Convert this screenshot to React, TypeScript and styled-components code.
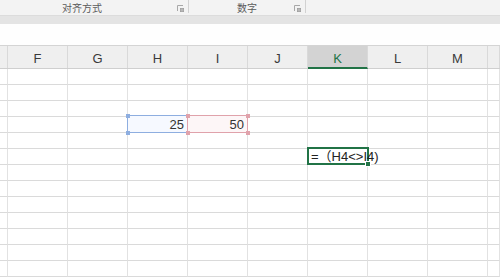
import React from "react";
import styled, { createGlobalStyle, css } from "styled-components";

const Global = createGlobalStyle`
  html, body { margin: 0; padding: 0; background: #fff; }
  body { width: 500px; height: 277px; overflow: hidden; font-family: "Liberation Sans", "Noto Sans CJK SC", sans-serif; }
  * { box-sizing: border-box; }
`;

const COLS = "8px repeat(8, 60px) 1fr";

const Page = styled.div`
  display: flex;
  flex-direction: column;
  width: 500px;
  height: 277px;
  overflow: hidden;
`;

const Ribbon = styled.div`
  display: flex;
  height: 15px;
  background: #f3f3f3;
`;

const Group = styled.div<{ $w: number; $shift?: number }>`
  position: relative;
  width: ${(p) => p.$w}px;
  height: 15px;
  display: flex;
  align-items: center;
  justify-content: center;
  padding-right: ${(p) => p.$shift ?? 0}px;
  border-right: 1px solid #d6d6d6;
  border-image: linear-gradient(to bottom, #d2d2d2 0, #d2d2d2 12px, transparent 12px) 1;
`;

const GroupLabel = styled.span`
  font-family: "Noto Sans CJK SC", sans-serif;
  font-size: 10px;
  line-height: 15px;
  height: 15px;
  color: #5a5a5a;
`;

const Launcher = styled.svg`
  position: absolute;
  right: 4px;
  top: 5px;
  width: 7px;
  height: 7px;
`;

const RibbonFoot = styled.div`
  height: 9px;
  background: #e4e4e4;
  border-top: 1px solid #dcdcdc;
`;

const FormulaArea = styled.div`
  height: 23px;
  background: #fefefe;
  border-bottom: 1px solid #d4d4d4;
`;

const HeaderRow = styled.div`
  display: grid;
  grid-template-columns: ${COLS};
  height: 24px;
  background: #efefef;
  border-bottom: 1px solid #cfcfcf;
`;

const HeadCell = styled.div<{ $active?: boolean }>`
  display: flex;
  align-items: flex-end;
  justify-content: center;
  padding-bottom: 1px;
  font-size: 13px;
  line-height: 16px;
  color: #3a3a3a;
  border-right: 1px solid #d9d9d9;
  ${(p) =>
    p.$active &&
    css`
      background: #d3d3d3;
      color: #217346;
      border-bottom: 2px solid #217346;
      margin-bottom: -1px;
      padding-bottom: 0;
    `}
`;

const Row = styled.div`
  display: grid;
  grid-template-columns: ${COLS};
  height: 16px;
  flex-shrink: 0;
`;

const Cell = styled.div<{ $noRight?: boolean }>`
  position: relative;
  height: 16px;
  border-right: 1px solid ${(p) => (p.$noRight ? "transparent" : "#e2e2e2")};
  border-bottom: 1px solid #dadada;
  font-size: 13px;
  line-height: 15px;
  color: #333;
  white-space: nowrap;
`;

const Value = styled.span`
  position: absolute;
  right: 3px;
  top: 0;
  z-index: 2;
`;

const FormulaText = styled.span`
  position: absolute;
  left: 3px;
  top: 0;
  z-index: 3;
  font-family: "Liberation Sans", "Noto Sans CJK SC", sans-serif;
  color: #222;
`;

const RefBox = styled.div<{ $color: string; $fill: string }>`
  position: absolute;
  top: -2px;
  left: -1px;
  right: -1px;
  bottom: -1px;
  border: 1px solid ${(p) => p.$color};
  background: ${(p) => p.$fill};
  z-index: 1;
`;

const Handle = styled.i<{ $color: string; $x: "l" | "r"; $y: "t" | "b" }>`
  position: absolute;
  width: 4px;
  height: 4px;
  background: ${(p) => p.$color};
  ${(p) => (p.$x === "l" ? "left: -2.5px;" : "right: -2.5px;")}
  ${(p) => (p.$y === "t" ? "top: -2.5px;" : "bottom: -2.5px;")}
`;

const ActiveBox = styled.div`
  position: absolute;
  top: -2px;
  left: -1px;
  right: -2px;
  bottom: -1px;
  border: 2px solid #217346;
  z-index: 2;
`;

const FillHandle = styled.i`
  position: absolute;
  right: -4px;
  bottom: -4px;
  width: 6px;
  height: 6px;
  background: #217346;
  border: 1px solid #fff;
`;

const letters = ["", "F", "G", "H", "I", "J", "K", "L", "M", ""];

const LauncherIcon = () => (
  <Launcher viewBox="0 0 7 7">
    <path d="M0.5 6 V0.5 H6" fill="none" stroke="#a8a8a8" strokeWidth="1" />
    <rect x="3" y="3" width="4" height="4" fill="#9a9a9a" />
    <rect x="3.5" y="3.5" width="3" height="3" fill="#b8b8b8" />
  </Launcher>
);

const Ref = ({ color, fill }: { color: string; fill: string }) => (
  <RefBox $color={color} $fill={fill}>
    <Handle $color={color} $x="l" $y="t" />
    <Handle $color={color} $x="r" $y="t" />
    <Handle $color={color} $x="l" $y="b" />
    <Handle $color={color} $x="r" $y="b" />
  </RefBox>
);

export default function App() {
  const rows = Array.from({ length: 13 }, (_, i) => i + 1);
  return (
    <Page>
      <Global />
      <Ribbon>
        <Group $w={189} $shift={24}>
          <GroupLabel>对齐方式</GroupLabel>
          <LauncherIcon />
        </Group>
        <Group $w={117}>
          <GroupLabel>数字</GroupLabel>
          <LauncherIcon />
        </Group>
      </Ribbon>
      <RibbonFoot />
      <FormulaArea />
      <HeaderRow>
        {letters.map((l, i) => (
          <HeadCell key={i} $active={l === "K"}>
            {l}
          </HeadCell>
        ))}
      </HeaderRow>
      {rows.map((r) => (
        <Row key={r}>
          {letters.map((l, i) => {
            if (r === 4 && l === "H")
              return (
                <Cell key={i}>
                  <Ref color="#8eaee0" fill="#f6f9ff" />
                  <Value>25</Value>
                </Cell>
              );
            if (r === 4 && l === "I")
              return (
                <Cell key={i}>
                  <Ref color="#e0a2ab" fill="#fdf6f7" />
                  <Value>50</Value>
                </Cell>
              );
            if (r === 6 && l === "K")
              return (
                <Cell key={i} $noRight>
                  <ActiveBox>
                    <FillHandle />
                  </ActiveBox>
                  <FormulaText>=（H4&lt;&gt;I4)</FormulaText>
                </Cell>
              );
            return <Cell key={i} />;
          })}
        </Row>
      ))}
    </Page>
  );
}
